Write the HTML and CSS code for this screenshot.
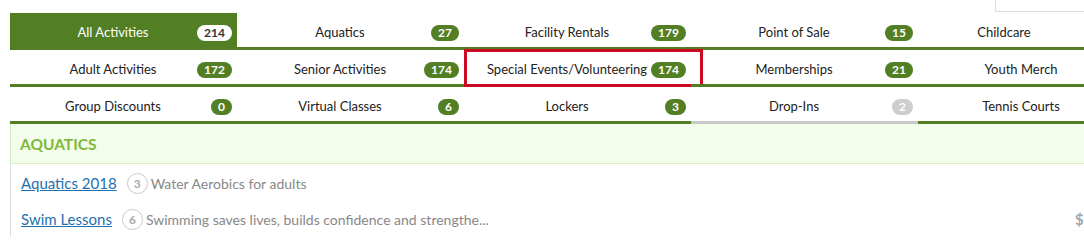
FILE: index.html
```html
<!DOCTYPE html>
<html lang="en">
<head>
<meta charset="utf-8">
<title>Activities</title>
<link rel="stylesheet" href="styles.css">
</head>
<body>
<div class="page">
  <div class="topbar"><div class="search-box"></div></div>
  <div class="tabs">
    <a class="tab active"><span class="label">All Activities</span><span class="badge">214</span></a>
    <a class="tab"><span class="label">Aquatics</span><span class="badge">27</span></a>
    <a class="tab"><span class="label">Facility Rentals</span><span class="badge">179</span></a>
    <a class="tab"><span class="label">Point of Sale</span><span class="badge">15</span></a>
    <a class="tab tab-short"><span class="label">Childcare</span></a>
    <a class="tab"><span class="label">Adult Activities</span><span class="badge">172</span></a>
    <a class="tab"><span class="label">Senior Activities</span><span class="badge">174</span></a>
    <a class="tab highlight"><span class="label">Special Events/Volunteering</span><span class="badge">174</span></a>
    <a class="tab"><span class="label">Memberships</span><span class="badge">21</span></a>
    <a class="tab"><span class="label">Youth Merch</span></a>
    <a class="tab"><span class="label">Group Discounts</span><span class="badge">0</span></a>
    <a class="tab"><span class="label">Virtual Classes</span><span class="badge">6</span></a>
    <a class="tab"><span class="label">Lockers</span><span class="badge">3</span></a>
    <a class="tab disabled"><span class="label">Drop-Ins</span><span class="badge">2</span></a>
    <a class="tab"><span class="label">Tennis Courts</span></a>
  </div>
  <div class="section-head">AQUATICS</div>
  <div class="list">
    <div class="row">
      <a class="item-link">Aquatics 2018</a>
      <span class="count">3</span>
      <span class="desc">Water Aerobics for adults</span>
    </div>
    <div class="row">
      <a class="item-link">Swim Lessons</a>
      <span class="count">6</span>
      <span class="desc">Swimming saves lives, builds confidence and strengthe...</span>
      <span class="price">$</span>
    </div>
  </div>
</div>
</body>
</html>
```
FILE: styles.css
```css
html, body {
  margin: 0;
  padding: 0;
  overflow: hidden;
  background: #fff;
}
body {
  font-family: Lato, "Open Sans", Arial, sans-serif;
  color: #222;
}
.page {
  width: 1135px;
  padding-left: 10px;
}
.topbar {
  height: 13px;
  display: flex;
  justify-content: flex-end;
}
.search-box {
  width: 149px;
  height: 11px;
  border-left: 1px solid #ddd;
  border-bottom: 1px solid #ddd;
}
.tabs {
  display: grid;
  grid-template-columns: repeat(5, 227px);
}
.tab {
  position: relative;
  padding: 3px 21px 0 0;
  box-sizing: content-box;
  height: 31px;
  display: flex;
  align-items: center;
  justify-content: center;
  border-bottom: 3px solid #527e24;
  font-size: 13px;
  color: #222;
  text-decoration: none;
  white-space: nowrap;
}
.tab.tab-short {
  padding-right: 55px;
}
.tab.active {
  background: #527e24;
  color: #fff;
}
.tab.disabled {
  border-bottom-color: #c8c8c8;
}
.badge {
  position: absolute;
  right: 5px;
  top: 12px;
  height: 16px;
  line-height: 16px;
  padding: 0 7px;
  border-radius: 8px;
  background: #527e24;
  color: #fff;
  font-size: 12px;
  font-weight: 700;
}
.tab.active .badge {
  background: #fff;
  color: #333;
}
.tab.disabled .badge {
  background: #cdcdcd;
}
.tab.highlight::after {
  content: "";
  position: absolute;
  left: 0;
  top: -1px;
  right: -12px;
  bottom: -3px;
  border: 3px solid #cc0a24;
}
.section-head {
  display: flex;
  align-items: center;
  padding: 1px 0 0 9px;
  box-sizing: border-box;
  height: 40px;
  background: #f2fdeb;
  border: 1px solid #d6efc4;
  border-top: none;
  color: #7fb83c;
  font-size: 15.5px;
  font-weight: 700;
}
.list {
  border-left: 1px solid #ddd;
  padding-top: 1px;
}
.row {
  height: 36px;
  display: flex;
  align-items: center;
  padding-left: 10px;
  white-space: nowrap;
}
.item-link {
  color: #1f6fae;
  text-decoration: underline;
  font-size: 15px;
}
.count {
  width: 21px;
  height: 21px;
  box-sizing: border-box;
  border: 1px solid #c9c9c9;
  border-radius: 50%;
  margin: 0 3px 0 10px;
  display: flex;
  align-items: center;
  justify-content: center;
  color: #aaa;
  font-size: 12px;
  font-weight: 700;
}
.desc {
  color: #888;
  font-size: 14px;
}
.price {
  margin-left: auto;
  width: 70px;
  color: #a0a6ae;
  font-size: 15px;
  font-weight: 700;
}
```
